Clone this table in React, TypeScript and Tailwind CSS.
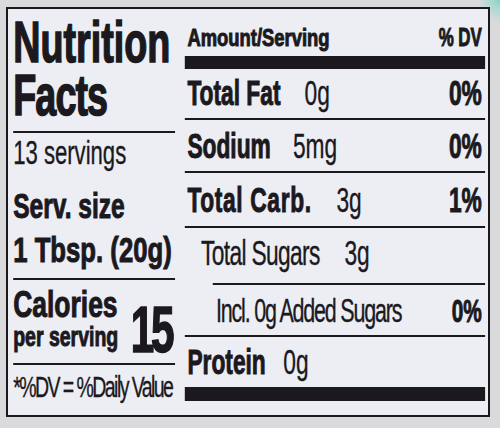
type Row = {
  label: string;
  value?: string;
  dv?: string;
  bold: boolean;
  box: string;
  gap?: string;
  label_cls: string;
  dv_cls?: string;
};

const heavy = "font-bold [-webkit-text-stroke:1px_#1b191e]";
const thin = "[-webkit-text-stroke:0.35px_#1b191e]";
// a few lines of the label use a slightly wider cut than the rest
const wide = "inline-block origin-left whitespace-nowrap";

const rows: Row[] = [
  { label: "Total Fat", value: "0g", dv: "0%", bold: true, box: "h-[51px] pt-[6px] pl-[4px] border-b-2", gap: "ml-[37px]", label_cls: "text-[35px] leading-[35px]" },
  { label: "Sodium", value: "5mg", dv: "0%", bold: true, box: "h-[53px] pt-[8px] pl-[4px] border-b-2", gap: "ml-[34px]", label_cls: "text-[35px] leading-[35px]" },
  { label: "Total Carb.", value: "3g", dv: "1%", bold: true, box: "h-[55px] pt-[9px] pl-[4px] border-b-2", gap: "ml-[38px]", label_cls: "text-[35px] leading-[35px] tracking-[1px]" },
  { label: "Total Sugars", value: "3g", bold: false, box: "h-[55px] pt-[7px] pl-[25px]", gap: "ml-[38px]", label_cls: "text-[35px] leading-[35px] tracking-[-1px]" },
  { label: "Incl. 0g Added Sugars", dv: "0%", bold: false, box: "h-[52px] pt-[9px] pl-[48px] border-b-2", label_cls: "text-[33px] leading-[33px] tracking-[-1.8px]", dv_cls: "text-[32px]" },
  { label: "Protein", value: "0g", bold: true, box: "h-[50px] pt-[7px] pl-[4px]", gap: "ml-[27px]", label_cls: "text-[35px] leading-[35px]" },
];

export default function App() {
  return (
    <div className="h-[428px] w-[500px] overflow-hidden bg-[#dadadc] bg-[radial-gradient(circle_at_100%_0%,#86cfc4_0px,#a9d9d2_8px,transparent_22px)] pl-[6px] pt-[7px]">
      <div className="h-[410px] w-[484px] overflow-hidden border-2 border-[#1b191e] bg-[#eceef4] text-[#1b191e]">
        {/* condensed type: whole label drawn wide, then squeezed */}
        <div className="flex h-full w-[738px] origin-top-left scale-x-[0.65] pl-[8px] pr-[4px] font-['Liberation_Sans',Arial,sans-serif]">
          {/* left column */}
          <div className="flex w-[249px] flex-col">
            <div className="border-b-2 border-[#1b191e] pt-[6px] pb-[10px] text-[58px] font-bold leading-[53px] [-webkit-text-stroke:1.6px_#1b191e]">
              <div>Nutrition</div>
              <div className="tracking-[-1.4px]">Facts</div>
            </div>
            <div className="border-b-2 border-[#1b191e] pt-[2px] pb-[6px]">
              <div className={`text-[34px] leading-[34px] ${thin}`}>13 servings</div>
              <div className={`mt-[15px] text-[35px] leading-[44px] ${heavy}`}>
                <div>
                  <span className={`${wide} scale-x-[1.08]`}>Serv. size</span>
                </div>
                <div>
                  <span className={`${wide} scale-x-[1.13]`}>1 Tbsp. (20g)</span>
                </div>
              </div>
            </div>
            <div className={`flex justify-between border-b-2 border-[#1b191e] pt-[6.5px] pb-[12.5px] ${heavy}`}>
              <div>
                <div className="text-[36px] leading-[36px]">
                  <span className={`${wide} scale-x-[1.13]`}>Calories</span>
                </div>
                <div className="text-[27px] leading-[28px]">
                  <span className={`${wide} scale-x-[1.11]`}>per serving</span>
                </div>
              </div>
              <div className="mr-[6px] self-end text-[65px] leading-[42px] tracking-[-5px] [-webkit-text-stroke:1.6px_#1b191e]">15</div>
            </div>
            <div className={`pt-[7px] text-[30px] leading-[30px] tracking-[-2.4px] ${thin}`}>*%DV = %Daily Value</div>
          </div>

          {/* right column */}
          <div className="ml-[15px] flex flex-1 flex-col">
            <div className={`flex h-[47px] items-baseline justify-between pt-[16px] pr-[5px] pl-[4px] ${heavy}`}>
              <span className={`${wide} scale-x-[1.18] text-[24px] leading-[24px]`}>Amount/Serving</span>
              <span className="text-[26px] leading-[24px]">% DV</span>
            </div>
            <div className="h-[13px] bg-[#1b191e]" />
            {rows.map((r) => (
              <div key={r.label}>
                <div className={`flex items-baseline border-[#1b191e] pr-[5px] ${r.box}`}>
                  <span className={`${r.bold ? heavy : thin} ${r.label_cls}`}>{r.label}</span>
                  {r.value && (
                    <span className={`text-[35px] leading-[35px] ${thin} ${r.gap}`}>{r.value}</span>
                  )}
                  {r.dv && (
                    <span className={`ml-auto leading-[35px] ${heavy} ${r.dv_cls ?? "text-[35px]"}`}>{r.dv}</span>
                  )}
                </div>
                {r.label === "Total Sugars" && <div className="ml-[43px] h-[2px] bg-[#1b191e]" />}
              </div>
            ))}
            <div className="h-[14px] bg-[#1b191e]" />
          </div>
        </div>
      </div>
    </div>
  );
}
